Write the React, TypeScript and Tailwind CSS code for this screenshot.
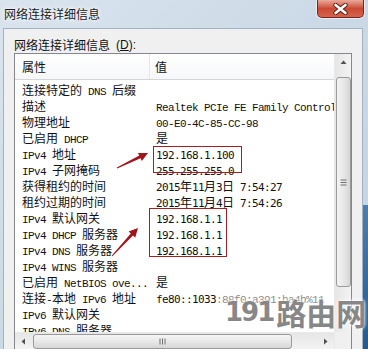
import React from 'react';

type Kind = 'serif' | 'sans';

type Row = {
    label: string;
    value?: string;
    kind?: Kind;
    extra?: string;
}

const rows: Row[] = [
    { label: '连接特定的 DNS 后缀' },
    { label: '描述', value: 'Realtek PCIe FE Family Controller', kind: 'serif' },
    { label: '物理地址', value: '00-E0-4C-85-CC-98', kind: 'serif' },
    { label: '已启用 DHCP', value: '是' },
    { label: 'IPv4 地址', value: '192.168.1.100', kind: 'sans' },
    { label: 'IPv4 子网掩码', value: '255.255.255.0', kind: 'sans' },
    { label: '获得租约的时间', value: '2015年11月3日 7:54:27', kind: 'sans' },
    { label: '租约过期的时间', value: '2015年11月4日 7:54:26', kind: 'sans' },
    { label: 'IPv4 默认网关', value: '192.168.1.1', kind: 'sans' },
    { label: 'IPv4 DHCP 服务器', value: '192.168.1.1', kind: 'sans' },
    { label: 'IPv4 DNS 服务器', value: '192.168.1.1', kind: 'sans' },
    { label: 'IPv4 WINS 服务器' },
    { label: '已启用 NetBIOS ove...', value: '是' },
    { label: '连接-本地 IPv6 地址', value: 'fe80::1033', kind: 'sans', extra: ':88f0:a391:ba4b%11' },
    { label: 'IPv6 默认网关' },
    { label: 'IPv6 DNS 服务器' },
];

// CJK runs get the CJK font, the rest a 6px-wide mono like SimSun's latin
const Mixed = ({ text, kind = 'serif' }: { text: string, kind?: Kind }) => {
    const parts = text.split(/([\u3000-\u9fff]+)/).filter(p => p !== '');
    return (
        <>
            {
                parts.map((p, i) => (
                    /[\u3000-\u9fff]/.test(p)
                        ? <span key={i} className="font-['Noto_Sans_CJK_SC',sans-serif] text-[12px] leading-[16px]">{p}</span>
                        : <span
                            key={i}
                            className={kind === 'serif'
                                ? "font-['Liberation_Mono',monospace] text-[11px] leading-[16px] tracking-[-0.6px] whitespace-pre"
                                : "font-['DejaVu_Sans_Mono',monospace] text-[11px] leading-[16px] tracking-[-0.62px] whitespace-pre"}
                        >
                            {p}
                        </span>
                ))
            }
        </>
    )
}

const Arrow = ({ dir }: { dir: 'up' | 'left' | 'right' }) => (
    <svg width="7" height="7" viewBox="0 0 7 7">
        {dir === 'up' && <polygon points="0.5,5 3.5,1.5 6.5,5" fill="#505050" />}
        {dir === 'left' && <polygon points="5,0.5 1.5,3.5 5,6.5" fill="#505050" />}
        {dir === 'right' && <polygon points="2,0.5 5.5,3.5 2,6.5" fill="#505050" />}
    </svg>
)

export default function App() {
    return (
        <div className="relative w-[368px] h-[349px] overflow-hidden bg-gradient-to-br from-[#d9e4ee] via-[#cbd9e6] to-[#c2d3e3] text-[#111]">
            {/* desktop behind the window */}
            <div className="absolute right-0 top-[205px] w-[5px] h-[144px] bg-gradient-to-b from-[#4b7fb3] to-[#1f5a92]"></div>

            {/* title bar */}
            <div className="flex items-start justify-between h-[28px]">
                <span className="mt-[6px] ml-[4px] font-['Noto_Sans_CJK_SC',sans-serif] text-[12px] leading-[16px] text-[#1b1b1b] [text-shadow:0_0_6px_#ffffff,0_0_3px_#ffffff]">
                    网络连接详细信息
                </span>
                <div className="mr-[4px] w-[47px] h-[18px] rounded-b-[5px] border border-t-0 border-[#6e2a22] bg-gradient-to-b from-[#e9a99a] via-[#c94a35] to-[#d8634a] flex items-center justify-center shadow-[0_0_0_1px_rgba(255,255,255,0.5)]">
                    <svg width="15" height="12" viewBox="0 0 15 12">
                        <path d="M2.5 2 L12.5 10 M12.5 2 L2.5 10" stroke="#5a1d16" strokeWidth="4.4" strokeLinecap="round" />
                        <path d="M2.5 2 L12.5 10 M12.5 2 L2.5 10" stroke="#ffffff" strokeWidth="2.6" strokeLinecap="round" />
                    </svg>
                </div>
            </div>

            {/* dialog body */}
            <div className="ml-[3px] w-[360px] h-[330px] bg-[#f0f0f0] border border-[#a3b2c2] pl-[10px] pt-[8px]">
                <div className="h-[16px] flex items-center leading-[16px]">
                    <Mixed text="网络连接详细信息 " />
                    <span className="font-['Liberation_Sans',sans-serif] text-[12px] leading-[16px]">(<span className="underline">D</span>):</span>
                </div>

                <div className="w-[338px] h-[297px] border border-[#828790] bg-white flex">
                    <div className="flex-1 flex flex-col min-w-0">
                        <div className="h-[26px] flex border-b border-[#d5d5d5] bg-gradient-to-b from-white to-[#f6f7f9]">
                            <div className="w-[135px] pl-[7px] flex items-center border-r border-[#e5e5e5] font-['Noto_Sans_CJK_SC',sans-serif] text-[12px]">属性</div>
                            <div className="pl-[5px] flex items-center font-['Noto_Sans_CJK_SC',sans-serif] text-[12px]">值</div>
                        </div>
                        <div className="flex-1 overflow-hidden pt-[1px]">
                            {
                                rows.map(row => (
                                    <div key={row.label} className="h-[16px] flex items-center leading-[16px] whitespace-nowrap">
                                        <div className="w-[135px] h-[16px] pl-[7px] overflow-hidden">
                                            <Mixed text={row.label} />
                                        </div>
                                        <div className="flex-1 h-[16px] pl-[6px] overflow-hidden">
                                            {row.value && <Mixed text={row.value} kind={row.kind} />}
                                            {row.extra && (
                                                <span className="text-[#8a8a8a]"><Mixed text={row.extra} kind="serif" /></span>
                                            )}
                                        </div>
                                    </div>
                                ))
                            }
                        </div>
                        {/* horizontal scrollbar */}
                        <div className="h-[17px] flex items-center bg-gradient-to-b from-[#e6e6e6] to-[#f3f3f3] border-t border-[#e9e9e9]">
                            <div className="w-[17px] flex justify-center"><Arrow dir="left" /></div>
                            <div className="ml-[1px] w-[259px] h-[15px] rounded-[3px] border border-[#9a9a9a] bg-gradient-to-b from-[#f4f4f4] via-[#e8e8e8] to-[#d6d6d6] flex items-center justify-center">
                                <svg width="7" height="7" viewBox="0 0 7 7">
                                    <path d="M1 0.5 V6.5 M3.5 0.5 V6.5 M6 0.5 V6.5" stroke="#707070" strokeWidth="1" />
                                </svg>
                            </div>
                            <div className="flex-1 flex justify-end pr-[5px]"><Arrow dir="right" /></div>
                        </div>
                    </div>

                    {/* vertical scrollbar */}
                    <div className="w-[17px] flex flex-col bg-gradient-to-r from-[#e6e6e6] to-[#f3f3f3] border-l border-[#e9e9e9]">
                        <div className="h-[17px] flex items-center justify-center"><Arrow dir="up" /></div>
                        <div className="mt-[6px] mx-auto w-[15px] h-[210px] rounded-[3px] border border-[#9a9a9a] bg-gradient-to-r from-[#f4f4f4] via-[#e8e8e8] to-[#d6d6d6] flex items-center justify-center">
                            <svg width="7" height="7" viewBox="0 0 7 7">
                                <path d="M0.5 1 H6.5 M0.5 3.5 H6.5 M0.5 6 H6.5" stroke="#707070" strokeWidth="1" />
                            </svg>
                        </div>
                        <div className="flex-1"></div>
                        <div className="h-[17px] bg-[#f0f0f0]"></div>
                    </div>
                </div>
            </div>

            {/* red marks drawn over the screenshot */}
            <div className="absolute left-[153px] top-[146px] w-[89px] h-[27px] border border-[#a31f24]"></div>
            <div className="absolute left-[149px] top-[208px] w-[78px] h-[49px] border border-[#a31f24]"></div>
            <svg className="absolute left-0 top-0 pointer-events-none" width="368" height="349" viewBox="0 0 368 349">
                <polygon points="116.8,167.5 139.3,155.5 137.9,152.9 148,153 141.9,161 140.6,158.3 117.2,168.5" fill="#a0151b" />
                <polygon points="111.6,255.7 130.8,233.6 128.6,231.5 138,228 135.2,237.7 133,235.6 112.4,256.3" fill="#a0151b" />
            </svg>

            {/* watermark */}
            <div className="absolute left-[225px] top-[296px] flex items-end whitespace-nowrap text-[#878787] font-bold [text-shadow:0_0_2px_#ffffff,0_0_4px_#ffffff]">
                <span className="font-['DejaVu_Sans',sans-serif] text-[26px] leading-[32px] tracking-[-2px]">191</span>
                <span className="ml-[3px] font-['Noto_Sans_CJK_SC',sans-serif] text-[30px] leading-[32px]">路由网</span>
            </div>
        </div>
    )
}
